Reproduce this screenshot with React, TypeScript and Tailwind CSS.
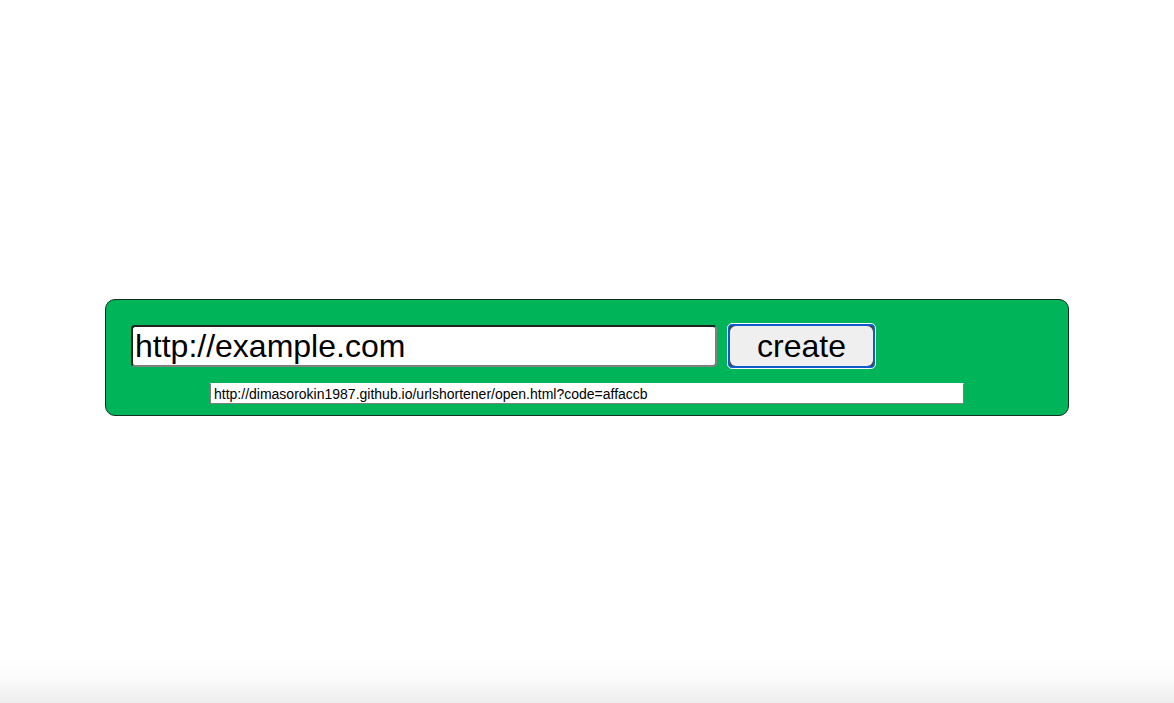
import { useState } from "react";
import type { FormEvent } from "react";

export default function App() {
  const [url, setUrl] = useState("http://example.com");
  const [shortUrl] = useState(
    "http://dimasorokin1987.github.io/urlshortener/open.html?code=affaccb",
  );

  const handleSubmit = (event: FormEvent) => event.preventDefault();

  return (
    <div className="flex min-h-screen flex-col bg-white font-['Liberation_Sans',Arial,sans-serif] text-black">
      <main className="flex flex-1 flex-col justify-center px-[105px] pt-[56px]">
        <form
          onSubmit={handleSubmit}
          className="rounded-[10px] border border-[#103020] bg-[#00b45a] px-[25px] pt-[24px] pb-[11px]"
        >
          <div className="flex items-center gap-[11px] pr-[168px]">
            <input
              type="text"
              aria-label="URL to shorten"
              value={url}
              onChange={(event) => setUrl(event.target.value)}
              className="h-[42px] min-w-0 flex-1 rounded-[4px] border-2 border-t-[#222222] border-r-[#808080] border-b-[#808080] border-l-[#222222] bg-white px-[2px] text-[32px] leading-9 outline-none"
            />
            <button
              type="submit"
              className="flex h-[44px] w-[147px] rounded-[4px] border-2 border-[#105acb] bg-[#444444] text-[32px] leading-9 outline-1 outline-white"
            >
              <span className="flex h-full w-full items-center justify-center rounded-[6px] bg-[#efefef]">
                create
              </span>
            </button>
          </div>
          <div className="mt-[15px] flex px-[79px]">
            <input
              type="text"
              readOnly
              aria-label="Short URL"
              value={shortUrl}
              className="h-[21px] min-w-0 flex-1 border border-t-white border-r-[#808080] border-b-[#808080] border-l-[#808080] bg-white px-[3px] text-[14px] leading-5 outline-none"
            />
          </div>
        </form>
      </main>
      <div className="h-[44px] bg-linear-to-b from-white via-[#fafafa] to-[#ededed]" />
    </div>
  );
}
